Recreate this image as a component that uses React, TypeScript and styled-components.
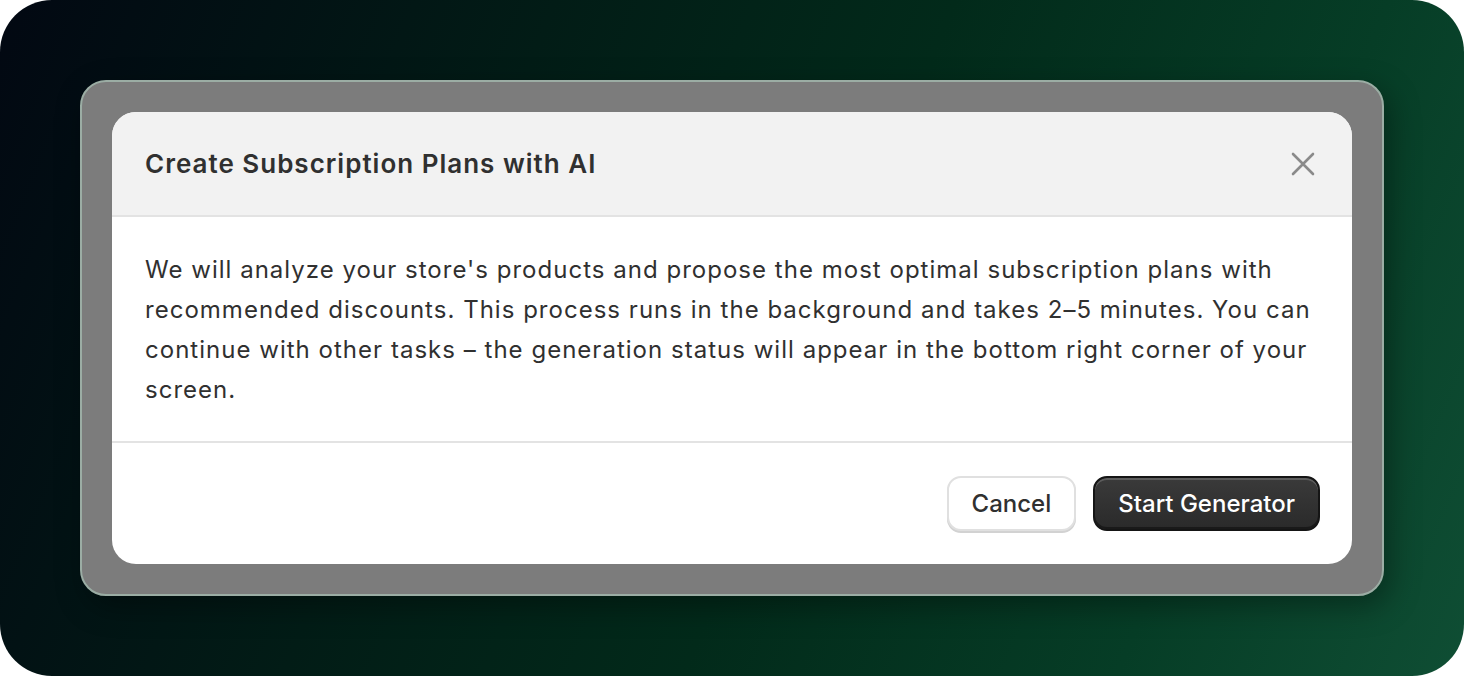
import React from 'react';
import styled, {createGlobalStyle} from "styled-components";

const GlobalStyle = createGlobalStyle`
  html, body {
    margin: 0;
    padding: 0;
    background: #ffffff;
  }
  * {
    box-sizing: border-box;
  }
`

const Stage = styled.div`
  width: 1464px;
  height: 676px;
  border-radius: 52px;
  overflow: hidden;
  background: linear-gradient(112deg, #020812 0%, #021c16 32%, #022a1a 55%, #063d26 80%, #0f4e34 100%);
  padding: 80px;
  display: flex;
`

const Backdrop = styled.div`
  flex: 1;
  height: 516px;
  background-color: #7c7c7c;
  border: 2px solid #9bada4;
  border-radius: 26px;
  padding: 30px;
  box-shadow: 6px 10px 30px rgba(0, 0, 0, 0.35);
  display: flex;
`

const ModalBlock = styled.div`
  flex: 1;
  background-color: #ffffff;
  border-radius: 24px;
  overflow: hidden;
  display: flex;
  flex-direction: column;
  font-family: Inter, "Noto Sans", sans-serif;
  color: #303030;
`

const Header = styled.div`
  height: 105px;
  flex-shrink: 0;
  background-color: #f2f2f2;
  border-bottom: 2px solid #e3e3e3;
  display: flex;
  align-items: center;
  justify-content: space-between;
  padding: 0 34px 0 33px;
`

const TitleModal = styled.h1`
  margin: 0;
  font-size: 26px;
  font-weight: 600;
  color: #303030;
  letter-spacing: 1px;
`

const CloseButton = styled.button`
  width: 30px;
  height: 30px;
  border: none;
  background: transparent;
  padding: 0;
  display: flex;
  align-items: center;
  justify-content: center;
  cursor: pointer;
`

const Body = styled.div`
  padding: 33px 32px 31px 33px;
  border-bottom: 2px solid #e3e3e3;
  font-size: 24px;
  line-height: 40px;
  letter-spacing: 1.02px;
  color: #303030;
`

const Footer = styled.div`
  flex: 1;
  display: flex;
  justify-content: flex-end;
  align-items: center;
  gap: 17px;
  padding: 0 32px;
`

const Button = styled.button<{$primary?: boolean}>`
  height: 55px;
  padding: 0 23px;
  border-radius: 14px;
  font-family: Inter, "Noto Sans", sans-serif;
  font-size: 24px;
  font-weight: 500;
  cursor: pointer;
  ${({$primary}) => $primary ? `
    color: #ffffff;
    background: linear-gradient(#3a3a3a, #2a2a2a);
    border: 2px solid #151515;
    box-shadow: inset 0 2px 0 rgba(255, 255, 255, 0.18), inset 0 -2px 0 rgba(0, 0, 0, 0.4);
  ` : `
    color: #303030;
    background: #ffffff;
    border: 2px solid #e0e0e0;
    box-shadow: 0 2px 0 #d2d2d2;
  `}
`

const App: React.FC = () => {
    return (
        <>
            <GlobalStyle/>
            <Stage>
                <Backdrop>
                    <ModalBlock>
                        <Header>
                            <TitleModal>Create Subscription Plans with AI</TitleModal>
                            <CloseButton aria-label="Close">
                                <svg width="24" height="24" viewBox="0 0 24 24" fill="none">
                                    <path d="M2 2L22 22M22 2L2 22" stroke="#8a8a8a" strokeWidth="2.6" strokeLinecap="round"/>
                                </svg>
                            </CloseButton>
                        </Header>
                        <Body>
                            We will analyze your store's products and propose the most optimal subscription plans with
                            recommended discounts. This process runs in the background and takes 2–5 minutes. You can
                            continue with other tasks – the generation status will appear in the bottom right corner of your
                            screen.
                        </Body>
                        <Footer>
                            <Button>Cancel</Button>
                            <Button $primary>Start Generator</Button>
                        </Footer>
                    </ModalBlock>
                </Backdrop>
            </Stage>
        </>
    );
}

export default App;
